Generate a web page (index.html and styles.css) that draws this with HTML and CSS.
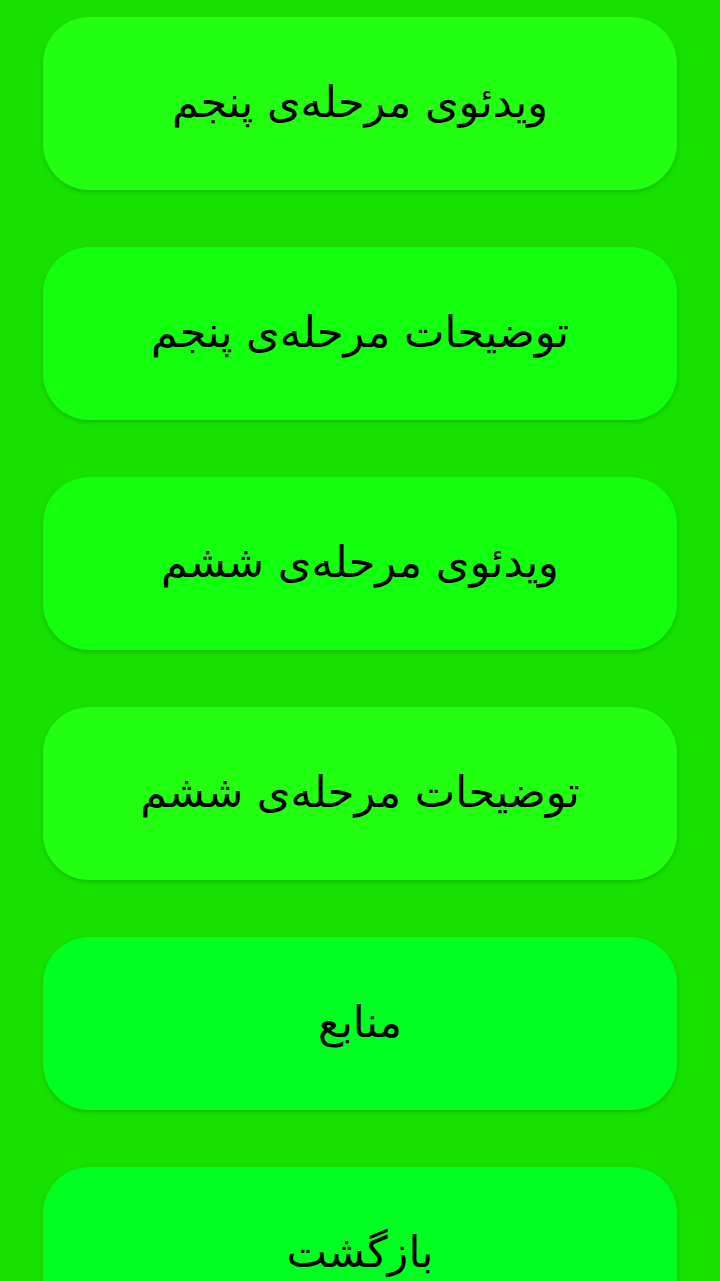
FILE: index.html
```html
<!DOCTYPE html>
<html lang="fa" dir="rtl">
<head>
<meta charset="utf-8">
<link rel="stylesheet" href="styles.css">
</head>
<body>
<div class="list">
  <div class="btn btn-a">ویدئوی مرحلەی پنجم</div>
  <div class="btn btn-b">توضیحات مرحلەی پنجم</div>
  <div class="btn btn-b">ویدئوی مرحلەی ششم</div>
  <div class="btn btn-a">توضیحات مرحلەی ششم</div>
  <div class="btn btn-c">منابع</div>
  <div class="btn btn-c">بازگشت</div>
</div>
</body>
</html>
```
FILE: styles.css
```css
html, body {
  margin: 0;
  padding: 0;
  background: #17e100;
  height: 1281px;
  overflow: hidden;
}
.list {
  display: flex;
  flex-direction: column;
  gap: 57px;
  padding: 17px 43px 0;
}
.btn {
  height: 173px;
  border-radius: 46px;
  display: flex;
  align-items: center;
  justify-content: center;
  font-family: "DejaVu Sans", sans-serif;
  font-size: 43px;
  line-height: 1;
  padding-bottom: 2px;
  box-sizing: border-box;
  color: #000;
  box-shadow: 0 2px 4px rgba(0, 0, 0, 0.18);
  flex-shrink: 0;
}
.btn-a { background: #23ff10; }
.btn-b { background: #12ff0e; }
.btn-c { background: #02ff22; }
```
